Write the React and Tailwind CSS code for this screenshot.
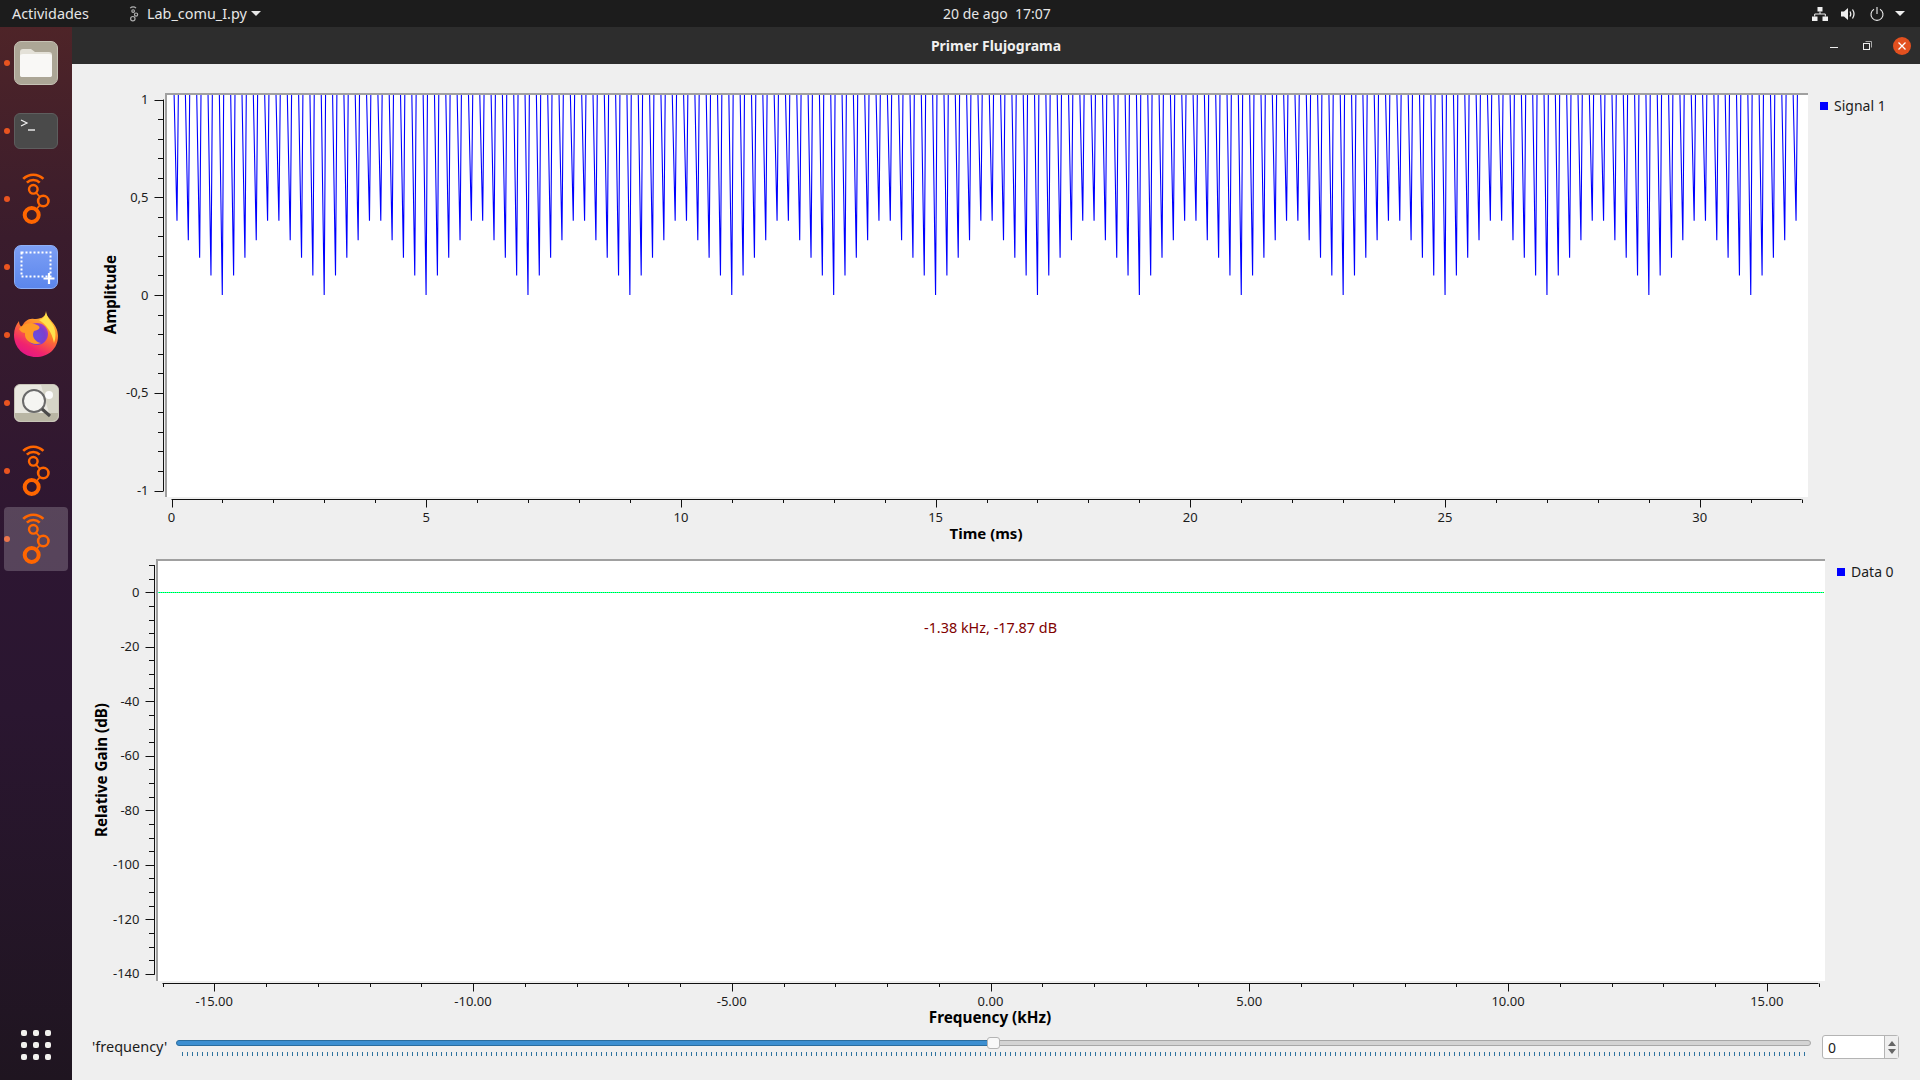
import React from 'react';

const fontSans = "font-['Noto_Sans','Open_Sans',sans-serif]";

// signal 1: dips repeat every 9 spikes
const DEPTHS = [0.38, 0.28, 0.19, 0.1, 0, 0.1, 0.19, 0.28, 0.38];
const spikePoints = () => {
  const pts = [];
  for (let k = 0; k < 144; k++) {
    const x = 177 + k * 11.322;
    const y = 295 - DEPTHS[k % 9] * 195.5;
    pts.push(`${(x - 3).toFixed(2)},90`, `${x.toFixed(2)},${y.toFixed(2)}`, `${(x + 1.4).toFixed(2)},90`);
  }
  return pts.join(' ');
};

const snap = (v) => Math.round(v) + 0.5;

const YAxis = ({ height, ticks }) => (
  <svg width="40" height={height} className="block shrink-0 overflow-visible">
    {ticks.map((t) => (
      <g key={t.y}>
        <line x1={t.label ? 29.5 : 33} x2="38" y1={snap(t.y)} y2={snap(t.y)} stroke="#111" />
        {t.label && (
          <text x="23.5" y={t.y + 4.5} textAnchor="end" fontSize="13" fill="#1c1c1c">
            {t.label}
          </text>
        )}
      </g>
    ))}
    <line x1="38.5" x2="38.5" y1={ticks[0].y} y2={ticks[ticks.length - 1].y + 1} stroke="#111" />
  </svg>
);

const XAxis = ({ width, ticks, axisY, labelY }) => (
  <svg width={width} height="30" className="block">
    <line x1={ticks[0].x} x2={ticks[ticks.length - 1].x} y1={axisY} y2={axisY} stroke="#111" />
    {ticks.map((t) => (
      <g key={t.x}>
        <line x1={snap(t.x)} x2={snap(t.x)} y1={axisY} y2={axisY + (t.label ? 8 : 3.5)} stroke="#111" />
        {t.label && (
          <text x={t.x} y={labelY} textAnchor="middle" fontSize="13" fill="#1c1c1c">
            {t.label}
          </text>
        )}
      </g>
    ))}
  </svg>
);

const Legend = ({ label }) => (
  <div className="ml-3 mt-[5px] flex h-4 items-center gap-[6px] whitespace-nowrap text-[14px] text-[#1c1c1c]">
    <span className="h-2 w-2 bg-[#0000ff]" />
    <span className="-mt-[2px]">{label}</span>
  </div>
);

const AxisTitle = ({ width, pad, label }) => (
  <div className="flex shrink-0 items-center justify-center" style={{ width, paddingLeft: pad }}>
    <span className="rotate-180 whitespace-nowrap text-[15.2px] font-bold leading-none text-black [writing-mode:vertical-rl]">
      {label}
    </span>
  </div>
);

const amplitudeTicks = Array.from({ length: 21 }, (_, i) => {
  const v = 10 - i;
  const labels = { 10: '1', 5: '0,5', 0: '0', '-5': '-0,5', '-10': '-1' };
  return { y: 6.5 + i * 19.55, label: labels[v] };
});

const gainTicks = Array.from({ length: 31 }, (_, i) => {
  const db = 10 - i * 5;
  return { y: 6 + i * 13.63, label: db % 20 === 0 ? String(db) : undefined };
});

const timeTicks = Array.from({ length: 33 }, (_, i) => ({
  x: 6.5 + i * 50.94,
  label: i % 5 === 0 ? String(i) : undefined,
}));

const freqTicks = Array.from({ length: 33 }, (_, i) => {
  const k = i - 16;
  return { x: 6.5 + i * 51.75, label: k % 5 === 0 ? `${k.toFixed(2)}` : undefined };
});

const TimePlot = () => (
  <div className="mt-[29px]">
    <div className="flex h-[404px]">
      <AxisTitle width={53} pad={25} label="Amplitude" />
      <YAxis height={404} ticks={amplitudeTicks} />
      <div className="h-full w-[1643px] shrink-0 border-l-2 border-t-2 border-[#a0a0a0] bg-white">
        <svg width="1641" height="402" viewBox="167 95 1641 402" className="block">
          <polyline points={spikePoints()} fill="none" stroke="#0000ff" strokeWidth="1.1" />
        </svg>
      </div>
      <Legend label="Signal 1" />
    </div>
    <div className="ml-[93px]">
      <XAxis width={1700} ticks={timeTicks} axisY={2.5} labelY={25} />
    </div>
    <div className="-mt-px w-[1828px] text-center text-[15px] font-bold leading-[14px] text-black">Time (ms)</div>
  </div>
);

const FreqPlot = () => (
  <div className="mt-[19px]">
    <div className="flex h-[422px]">
      <AxisTitle width={44} pad={15} label="Relative Gain (dB)" />
      <YAxis height={422} ticks={gainTicks} />
      <div className="relative h-full w-[1669px] shrink-0 border-l-2 border-t-2 border-[#a0a0a0] bg-white">
        <svg width="1667" height="420" viewBox="158 561 1667 420" className="block">
          <line x1="158" x2="1824" y1="592.5" y2="592.5" stroke="#00ff00" />
          <line x1="158" x2="1824" y1="592.5" y2="592.5" stroke="#00ffe0" strokeDasharray="1 1" />
        </svg>
        <span className="absolute left-[766px] top-[58px] whitespace-nowrap text-[14.4px] leading-[18px] text-[#800000]">
          -1.38 kHz, -17.87 dB
        </span>
      </div>
      <Legend label="Data 0" />
    </div>
    <div className="ml-[84px]">
      <XAxis width={1700} ticks={freqTicks} axisY={2.5} labelY={25} />
    </div>
    <div className="-mt-px w-[1836px] text-center text-[15.3px] font-bold leading-[14px] text-black">Frequency (kHz)</div>
  </div>
);

const FrequencySlider = () => (
  <div className="mt-[11px] flex h-6 items-center">
    <div className="ml-5 w-[84px] shrink-0 whitespace-nowrap text-[14.5px] text-[#1c1c1c]">'frequency'</div>
    <div className="relative h-6 w-[1635px] shrink-0 pt-[5px]">
      <div className="flex h-[6px]">
        <div className="w-[817px] rounded-l-[3px] border border-[#2b6d9e] bg-[#3d8fd1]" />
        <div className="flex-1 rounded-r-[3px] border border-[#a8a8a8] bg-[#d4d4d4]" />
      </div>
      <svg width="1635" height="4" className="mt-[6px] block">
        {Array.from({ length: 326 }, (_, i) => (
          <line key={i} x1={snap(6 + i * 4.99)} x2={snap(6 + i * 4.99)} y1="0" y2="4" stroke="#2f739f" />
        ))}
      </svg>
      <div className="absolute left-[811px] top-[2px] h-3 w-[13px] rounded-[3px] border border-[#b4b4b4] bg-[#f8f8f8]" />
    </div>
    <div className="ml-[11px] flex h-6 w-[77px] shrink-0 rounded-[3px] border border-[#b4b4b4] bg-white text-[14px] text-[#1c1c1c]">
      <div className="flex flex-1 items-center pl-[5px]">0</div>
      <div className="flex w-[14px] flex-col items-center justify-center gap-[3px] border-l border-[#b4b4b4] bg-[#efefef]">
        <svg width="8" height="5" className="block"><path d="M0 5 L4 0 L8 5 Z" fill="#666" /></svg>
        <svg width="8" height="5" className="block"><path d="M0 0 L4 5 L8 0 Z" fill="#666" /></svg>
      </div>
    </div>
  </div>
);

const RadioLogo = ({ color = '#ff6600' }) => (
  <svg width="48" height="52" viewBox="0 0 48 52" className="block">
    <g fill="none" stroke={color}>
      <path d="M11.2 5.9 A14.3 14.3 0 0 1 31.4 5.9" strokeWidth="2.6" />
      <path d="M14.9 9.6 A9 9 0 0 1 27.7 9.6" strokeWidth="2.6" />
      <circle cx="21.3" cy="16.3" r="4.3" strokeWidth="2.4" />
      <circle cx="31.3" cy="28" r="5.2" strokeWidth="2.6" />
      <circle cx="19.7" cy="42" r="7" strokeWidth="4" />
      <line x1="24" y1="19.6" x2="28" y2="24" strokeWidth="1.8" />
      <line x1="28" y1="32" x2="24.2" y2="36.5" strokeWidth="1.8" />
    </g>
  </svg>
);

const FilesIcon = () => (
  <div className="flex h-11 w-11 items-center justify-center rounded-[7px] border border-[#c6c2b5] bg-[#aca696]">
    <svg width="34" height="30" viewBox="0 0 34 30" className="block">
      <path d="M1 4 Q1 1 4 1 H12 L16 4 H30 Q33 4 33 7 V27 Q33 29 30 29 H4 Q1 29 1 27 Z" fill="#e4e1d8" />
      <path d="M1 8 Q1 6 4 6 H30 Q33 6 33 8 V27 Q33 29 30 29 H4 Q1 29 1 27 Z" fill="#f9f8f6" />
    </svg>
  </div>
);

const TerminalIcon = () => (
  <div className="h-9 w-11 rounded-[6px] border border-[#5e5e5e] bg-[#4a4a4a] pl-[5px] pt-[5px]">
    <svg width="18" height="12" viewBox="0 0 18 12" className="block">
      <path d="M1 1 L7 4 L1 7" fill="none" stroke="#f2f2f2" strokeWidth="1.2" />
      <line x1="8" x2="15" y1="11" y2="11" stroke="#f2f2f2" strokeWidth="1.4" />
    </svg>
  </div>
);

const ScreenshotIcon = () => (
  <div className="h-11 w-11 rounded-[7px] border border-[#8fb0f7] bg-gradient-to-b from-[#7d9ff5] to-[#5b86ec]">
    <svg width="42" height="42" viewBox="0 0 42 42" className="block">
      <rect x="6.5" y="6.5" width="29" height="24" fill="none" stroke="#fff" strokeWidth="2" strokeDasharray="2 2" />
      <path d="M34 27 V38 M28.5 32.5 H39.5" stroke="#fff" strokeWidth="2.2" />
    </svg>
  </div>
);

const FirefoxIcon = () => (
  <svg width="46" height="48" viewBox="0 0 46 48" className="-mt-[2px] block">
    <defs>
      <linearGradient id="ffBody" x1="0.8" y1="0" x2="0.3" y2="1">
        <stop offset="0" stopColor="#ffd43a" />
        <stop offset="0.45" stopColor="#ff7a2a" />
        <stop offset="0.8" stopColor="#f0246e" />
        <stop offset="1" stopColor="#e31587" />
      </linearGradient>
      <radialGradient id="ffGlobe" cx="0.45" cy="0.6" r="0.6">
        <stop offset="0" stopColor="#6a4fe0" />
        <stop offset="0.7" stopColor="#7b3fd0" />
        <stop offset="1" stopColor="#a83cc0" />
      </radialGradient>
    </defs>
    <path d="M33 1 C33 9 45 13 45 26 C45 39 35 47 23 47 C11 47 1 38 1 25 C1 19 3 15 6 11 C6 14 7 16 9 17 C11 11 16 8 21 9 C26 9 33 8 33 1 Z" fill="url(#ffBody)" />
    <path d="M33 1 C33 7 38 11 41 17 C43 22 43 28 41 33 C39 22 33 14 26 10 C30 9 33 6 33 1 Z" fill="#ffe14d" />
    <circle cx="24" cy="24" r="11" fill="url(#ffGlobe)" />
    <path d="M6 19 C10 13 18 12 24 15 C29 17 26 20 21 21 C18 26 22 32 28 33 C20 36 11 31 12 23 C10 23 8 22 6 19 Z" fill="#ff9a26" />
  </svg>
);

const LensIcon = () => (
  <div className="relative h-[38px] w-[45px] overflow-hidden rounded-[6px] border border-[#c8c5b8] bg-[#e9e8e0]">
    <svg width="43" height="36" viewBox="0 0 43 36" className="block">
      <path d="M0 28 H43 V36 H0 Z" fill="#b9b6a4" />
      <path d="M26 0 L43 0 V28 H34 Z" fill="#d6d5c8" />
      <circle cx="34" cy="10" r="4" fill="#fafafa" />
      <circle cx="19" cy="16" r="11" fill="#f5f5f2" stroke="#6a6a6a" strokeWidth="2" />
      <line x1="27" y1="24" x2="35" y2="31" stroke="#4a4a4a" strokeWidth="3" />
    </svg>
  </div>
);

const DockItem = ({ children, active }) => (
  <div className="relative flex h-[68px] items-center justify-center">
    <span className="absolute left-1 top-[31px] h-[6px] w-[6px] rounded-full bg-[#e95420]" />
    {active && <span className="absolute inset-x-1 inset-y-[2px] rounded-[4px] bg-white/20" />}
    <div className="relative">{children}</div>
  </div>
);

const Dock = () => (
  <div className="flex w-[72px] shrink-0 flex-col bg-[linear-gradient(180deg,#4e2428_0%,#3a1c2c_20%,#2d1632_50%,#2a1630_65%,#1f1520_100%)] pt-[2px]">
    <DockItem><FilesIcon /></DockItem>
    <DockItem><TerminalIcon /></DockItem>
    <DockItem><RadioLogo /></DockItem>
    <DockItem><ScreenshotIcon /></DockItem>
    <DockItem><FirefoxIcon /></DockItem>
    <DockItem><LensIcon /></DockItem>
    <DockItem><RadioLogo /></DockItem>
    <DockItem active><RadioLogo /></DockItem>
    <div className="mt-auto mb-[20px] flex justify-center">
      <div className="grid grid-cols-3 gap-[6px]">
        {Array.from({ length: 9 }, (_, i) => (
          <span key={i} className="h-[6px] w-[6px] rounded-[2px] bg-[#f2f0ee]" />
        ))}
      </div>
    </div>
  </div>
);

const TopBar = () => (
  <div className="flex h-[27px] shrink-0 items-center bg-[#1c1c1c] text-[14.4px] text-[#e6e6e6]">
    <div className="ml-3 w-[115px] shrink-0">Actividades</div>
    <svg width="14" height="18" viewBox="0 0 48 52" className="shrink-0 overflow-visible">
      <g fill="none" stroke="#b0b0b0" strokeWidth="4">
        <path d="M11 6 A14 14 0 0 1 31 6" />
        <circle cx="21" cy="16" r="4.5" />
        <circle cx="31" cy="28" r="5.5" />
        <circle cx="20" cy="42" r="7.5" />
      </g>
    </svg>
    <div className="ml-[6px] w-[99px] shrink-0 whitespace-nowrap">Lab_comu_I.py</div>
    <svg width="10" height="5" className="ml-[5px] shrink-0"><path d="M0 0 H10 L5 5 Z" fill="#e6e6e6" /></svg>
    <div className="ml-[682px] w-[110px] shrink-0 whitespace-pre text-[14px]">20 de ago  17:07</div>
    <div className="ml-auto mr-[15px] flex items-center">
      <svg width="16" height="14" viewBox="0 0 16 14" className="block">
        <path d="M5.5 0 H10.5 V4.5 H5.5 Z M0 9.5 H5.5 V14 H0 Z M10.5 9.5 H16 V14 H10.5 Z" fill="#eee" />
        <path d="M8 4.5 V7 M2.7 9.5 V7 H13.3 V9.5" fill="none" stroke="#eee" />
      </svg>
      <svg width="15" height="14" viewBox="0 0 15 14" className="ml-[13px] block">
        <path d="M0 4.5 H3 L7 1 V13 L3 9.5 H0 Z" fill="#eee" />
        <path d="M9 4.5 Q10.5 7 9 9.5 M11.5 2.5 Q14.5 7 11.5 11.5" fill="none" stroke="#eee" strokeWidth="1.3" />
      </svg>
      <svg width="14" height="14" viewBox="0 0 14 14" className="ml-[14px] block">
        <path d="M4 2.2 A6 6 0 1 0 10 2.2" fill="none" stroke="#eee" strokeWidth="1.1" />
        <line x1="7" x2="7" y1="0" y2="7" stroke="#eee" strokeWidth="1.1" />
      </svg>
      <svg width="10" height="5" className="ml-[11px] block"><path d="M0 0 H10 L5 5 Z" fill="#eee" /></svg>
    </div>
  </div>
);

const TitleBar = () => (
  <div className="grid h-[37px] shrink-0 grid-cols-[1fr_auto_1fr] items-center bg-[#2d2d2d]">
    <div />
    <div className="text-[14px] font-bold text-[#f0f0f0]">Primer Flujograma</div>
    <div className="flex items-center justify-end pr-[9px]">
      <span className="mt-[4px] h-px w-2 bg-[#eee]" />
      <svg width="9" height="9" viewBox="0 0 9 9" className="ml-[25px] block">
        <path d="M2.5 0.5 H8.5 V6.5" fill="none" stroke="#aaa" />
        <rect x="0.5" y="2.5" width="6" height="6" fill="none" stroke="#eee" />
      </svg>
      <div className="ml-[21px] flex h-[18px] w-[18px] items-center justify-center rounded-full bg-[#e2501f]">
        <svg width="8" height="8" viewBox="0 0 8 8" className="block">
          <path d="M0.5 0.5 L7.5 7.5 M7.5 0.5 L0.5 7.5" stroke="#fff" strokeWidth="1.3" />
        </svg>
      </div>
    </div>
  </div>
);

export default function App() {
  return (
    <div className={`flex h-[1080px] w-[1920px] flex-col overflow-hidden ${fontSans}`}>
      <TopBar />
      <div className="flex min-h-0 flex-1">
        <Dock />
        <div className="flex min-w-0 flex-1 flex-col">
          <TitleBar />
          <div className="flex-1 overflow-hidden bg-[#efefef]">
            <TimePlot />
            <FreqPlot />
            <FrequencySlider />
          </div>
        </div>
      </div>
    </div>
  );
}
